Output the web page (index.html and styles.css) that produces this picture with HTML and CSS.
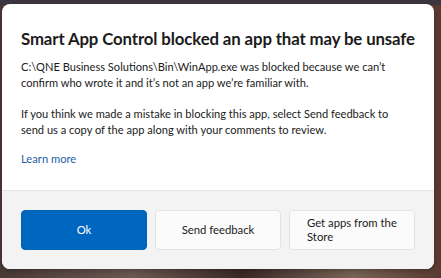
FILE: index.html
```html
<!DOCTYPE html>
<html>
<head>
<meta charset="utf-8">
<link rel="stylesheet" href="styles.css">
</head>
<body>
<div class="dialog">
  <div class="content">
    <h1 class="title">Smart App Control blocked an app that may be unsafe</h1>
    <p class="text">C:\QNE Business Solutions\Bin\WinApp.exe was blocked because we can’t<br>confirm who wrote it and it’s not an app we’re familiar with.</p>
    <p class="text">If you think we made a mistake in blocking this app, select Send feedback to<br>send us a copy of the app along with your comments to review.</p>
    <a class="link" href="#">Learn more</a>
  </div>
  <div class="footer">
    <button class="btn primary">Ok</button>
    <button class="btn">Send feedback</button>
    <button class="btn left">Get apps from the Store</button>
  </div>
</div>
</body>
</html>
```
FILE: styles.css
```css
html, body {
  margin: 0;
  height: 100%;
}
body {
  background:
    linear-gradient(180deg, #3b3641 0, #3b3641 5px, transparent 5px),
    linear-gradient(90deg, #4a3a36 0, #6b5a52 30%, #3a2a26 55%, #7a6458 80%, #5a3a30 100%);
  padding: 4px 7px 0 2px;
  box-sizing: border-box;
  font-family: "Lato", "Liberation Sans", sans-serif;
  overflow: hidden;
}
.dialog {
  width: 432px;
  height: 265px;
  background: #ffffff;
  border-radius: 8px;
  overflow: hidden;
  display: flex;
  flex-direction: column;
  box-shadow: 0 2px 6px rgba(0,0,0,0.3);
}
.content {
  flex: 1;
  padding: 24px 10px 0 19px;
}
.title {
  margin: 0 0 9px;
  font-size: 16.8px;
  font-weight: 700;
  letter-spacing: -0.12px;
  color: #1b1b1b;
  line-height: 22px;
  white-space: nowrap;
}
.text {
  margin: 0 0 15px;
  font-size: 11.1px;
  line-height: 16px;
  color: #1b1b1b;
  white-space: nowrap;
}
.text + .text {
  margin-bottom: 13px;
}
.link {
  display: block;
  font-size: 11.2px;
  line-height: 16px;
  color: #1f5fa3;
  text-decoration: none;
}
.footer {
  height: 79px;
  box-sizing: border-box;
  background: #f3f3f3;
  border-top: 1px solid #e5e5e5;
  display: flex;
  gap: 8px;
  padding: 19px 19px 0 19px;
}
.btn {
  width: 126px;
  height: 40px;
  border: 1px solid #e3e3e3;
  border-radius: 4px;
  background: #fbfbfb;
  font-family: inherit;
  font-size: 11.3px;
  color: #1b1b1b;
  line-height: 14px;
  padding: 0 10px;
}
.btn.primary {
  background: #0067c0;
  border-color: #0063b8;
  color: #fff;
}
.btn.left {
  text-align: left;
  padding-left: 17px;
  padding-right: 8px;
}
```
